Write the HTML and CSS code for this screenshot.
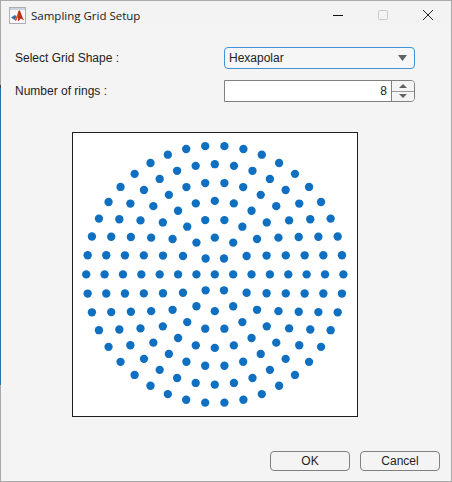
FILE: index.html
```html
<!DOCTYPE html>
<html lang="en">

<head>
    <meta charset="UTF-8">
    <title>Sampling Grid Setup</title>
    <link rel="stylesheet" href="styles.css">
</head>

<body>
    <div class="window">
        <div class="titlebar">
            <svg class="app-icon" width="17" height="17" viewBox="0 0 17 17">
                <rect x="0.5" y="0.5" width="16" height="16" fill="#f8f8fa" stroke="#a9adb5"/>
                <rect x="1" y="1" width="15" height="2" fill="#c9d3e2"/>
                <path d="M2 10.5 L6 8 L7.5 9.5 L5.5 13 Z" fill="#2f6fb3"/>
                <path d="M5.5 13 L7.5 9.5 L9.5 4 L11 3.5 L9 10 L7 14 Z" fill="#d9541a"/>
                <path d="M9.5 4 L11 3.5 L13 9 L15 13.5 L12 11.5 L9 14.5 L9 10 Z" fill="#b8321c"/>
            </svg>
            <span class="title">Sampling Grid Setup</span>
            <div class="window-buttons">
                <svg width="12" height="12" viewBox="0 0 12 12"><path d="M1 6.5 H11" stroke="#111" stroke-width="1"/></svg>
                <svg width="12" height="12" viewBox="0 0 12 12"><rect x="1.5" y="1.5" width="9" height="9" rx="1" fill="none" stroke="#c8c8c8"/></svg>
                <svg width="12" height="12" viewBox="0 0 12 12"><path d="M1 1 L11 11 M11 1 L1 11" stroke="#222" stroke-width="1"/></svg>
            </div>
        </div>

        <div class="content">
            <div class="form">
                <label class="field-label">Select Grid Shape :</label>
                <div class="dropdown">
                    <span>Hexapolar</span>
                    <svg width="9" height="6" viewBox="0 0 9 6"><path d="M0 0 H9 L4.5 6 Z" fill="#5f6368"/></svg>
                </div>
                <label class="field-label">Number of rings :</label>
                <div class="spinner">
                    <span class="spinner-value">8</span>
                    <div class="spinner-buttons">
                        <div class="step"><svg width="8" height="4" viewBox="0 0 8 4"><path d="M0 4 H8 L4 0 Z" fill="#5f6368"/></svg></div>
                        <div class="step"><svg width="8" height="4" viewBox="0 0 8 4"><path d="M0 0 H8 L4 4 Z" fill="#5f6368"/></svg></div>
                    </div>
                </div>
            </div>

            <svg class="axes" id="axes" width="286" height="285" viewBox="72 132 286 285"></svg>

            <div class="footer">
                <button class="btn">OK</button>
                <button class="btn">Cancel</button>
            </div>
        </div>
    </div>

    <script src="script.js"></script>
</body>

</html>
```

FILE: styles.css
```css
html, body {
    margin: 0;
    padding: 0;
}

body {
    width: 452px;
    height: 482px;
    overflow: hidden;
    background: linear-gradient(#a9a9a9 0, #a9a9a9 85px, #444 85px, #444 88px, #2a6ea6 88px, #2a6ea6 385px, #a9a9a9 385px);
    font-family: "Liberation Sans", Arial, sans-serif;
}

.window {
    box-sizing: border-box;
    width: 451px;
    height: 481px;
    margin-left: 1px;
    border-top: 1px solid #a9a9a9;
    border-right: 1px solid #a9a9a9;
    background-color: #f4f4f4;
    display: flex;
    flex-direction: column;
}

.titlebar {
    box-sizing: border-box;
    height: 30px;
    display: flex;
    align-items: center;
    padding: 0 0 2px 8px;
    background-color: #f3f3f3;
}

.app-icon {
    margin-right: 5px;
}

.title {
    font-family: "Open Sans", "Noto Sans", sans-serif;
    font-size: 11.5px;
    color: #1a1a1a;
}

.window-buttons {
    margin-left: auto;
    display: flex;
    gap: 33px;
    margin-right: 17px;
}

.content {
    flex: 1;
    display: flex;
    flex-direction: column;
    padding: 16px 11px 10px 14px;
}

.form {
    display: grid;
    grid-template-columns: 209px 191px;
    grid-auto-rows: 22px;
    row-gap: 11px;
    align-items: center;
}

.field-label {
    font-size: 12px;
    color: #222;
}

.dropdown {
    box-sizing: border-box;
    height: 22px;
    display: flex;
    align-items: center;
    justify-content: space-between;
    padding: 0 7px 0 4px;
    background-color: #f6f6f6;
    border: 1px solid #3d93d9;
    border-radius: 4px;
    font-size: 12px;
    color: #222;
}

.spinner {
    box-sizing: border-box;
    height: 22px;
    display: flex;
    background-color: #fff;
    border: 1px solid #808080;
    border-radius: 0 4px 4px 0;
    font-size: 12px;
    color: #222;
}

.spinner-value {
    flex: 1;
    text-align: right;
    line-height: 20px;
    padding-right: 4px;
}

.spinner-buttons {
    width: 22px;
    display: flex;
    flex-direction: column;
    background-color: #f4f4f4;
    border-left: 1px solid #808080;
    border-radius: 0 3px 3px 0;
}

.step {
    flex: 1;
    display: flex;
    align-items: center;
    justify-content: center;
}

.step + .step {
    border-top: 1px solid #9a9a9a;
}

.axes {
    display: block;
    box-sizing: border-box;
    margin: 30px 0 0 57px;
    background-color: #fff;
    border: 1px solid #1f1f1f;
}

.footer {
    margin-top: auto;
    display: flex;
    justify-content: flex-end;
    gap: 10px;
}

.btn {
    width: 80px;
    height: 20px;
    padding: 0;
    background-color: #f4f4f4;
    border: 1px solid #808080;
    border-radius: 4px;
    font-family: "Liberation Sans", Arial, sans-serif;
    font-size: 12px;
    color: #222;
}
```

FILE: script.js
```js
// hexapolar grid: centre point plus rings of 6k points
var axes = document.getElementById('axes');
var cx = 214.8, cy = 274.4, step = 18.5;

function addDot(x, y) {
    var dot = document.createElementNS('http://www.w3.org/2000/svg', 'circle');
    dot.setAttribute('cx', x.toFixed(2));
    dot.setAttribute('cy', y.toFixed(2));
    dot.setAttribute('r', 4.2);
    dot.setAttribute('fill', '#0f6fc0');
    axes.appendChild(dot);
}

addDot(cx, cy);
for (var k = 1; k <= 7; k++) {
    var n = 6 * k;
    for (var j = 0; j < n; j++) {
        var a = 2 * Math.PI * j / n;
        addDot(cx + k * step * Math.cos(a), cy + k * step * Math.sin(a));
    }
}
```
